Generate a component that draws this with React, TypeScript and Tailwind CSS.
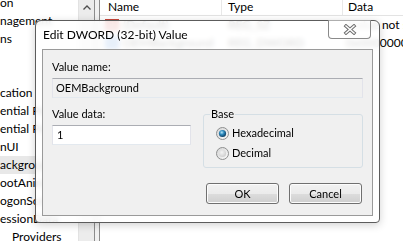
import React from "react";

// Background registry editor rows (left tree is scrolled, so only tails of names show)
const treeRows = [
  "on",
  "nagement",
  "ns",
  "",
  "",
  "cation",
  "ential Provider Filters",
  "ential Providers",
  "nUI",
  "ackground",
  "ootAnimation",
  "ogonScreen",
  "essionData",
];

function Radio({ checked }: { checked: boolean }) {
  return (
    <svg width="13" height="13" viewBox="0 0 13 13" className="shrink-0">
      <defs>
        <linearGradient id={checked ? "ringOn" : "ringOff"} x1="0" y1="0" x2="1" y2="1">
          <stop offset="0" stopColor="#d4d4d4" />
          <stop offset="1" stopColor="#fbfbfb" />
        </linearGradient>
        <radialGradient id="dotOn" cx="40%" cy="35%" r="65%">
          <stop offset="0" stopColor="#b8e6f8" />
          <stop offset="0.45" stopColor="#2e8bbf" />
          <stop offset="1" stopColor="#0d3f63" />
        </radialGradient>
        <radialGradient id="dotOff" cx="40%" cy="35%" r="65%">
          <stop offset="0" stopColor="#f4f4f4" />
          <stop offset="1" stopColor="#cfcfcf" />
        </radialGradient>
      </defs>
      <circle cx="6.5" cy="6.5" r="6" fill={`url(#${checked ? "ringOn" : "ringOff"})`} stroke="#8e8f8f" />
      <circle cx="6.5" cy="6.5" r="3.6" fill={checked ? "url(#dotOn)" : "url(#dotOff)"} />
    </svg>
  );
}

function WinButton({ label }: { label: string }) {
  return (
    <button className="w-[73px] h-[21px] rounded-[3px] border border-[#707070] bg-[linear-gradient(to_bottom,#f2f2f2_0%,#ebebeb_50%,#dddddd_50%,#cfcfcf_100%)] shadow-[inset_0_0_0_1px_#fcfcfc] text-[11px] leading-[19px] text-black">
      {label}
    </button>
  );
}

export default function App() {
  return (
    <div className="relative w-[403px] h-[241px] overflow-hidden bg-white flex text-black font-[Lato,'Noto_Sans',sans-serif]">
      {/* Tree pane */}
      <div className="w-[95px] shrink-0 flex border-r border-[#8c8c8c]">
        <div className="flex-1 overflow-hidden whitespace-nowrap text-[12px] -mt-[6px]">
          {treeRows.map((t, i) => (
            <div key={i} className={`h-[18px] leading-[18px] ${i === 9 ? "bg-[#e8e8e8]" : ""}`}>
              {t}
            </div>
          ))}
          <div className="h-[18px] leading-[18px] pl-[12px]">Providers</div>
        </div>
        <div className="w-[16px] bg-[#ececec] border-l border-[#e2e2e2] flex flex-col">
          <div className="h-[14px] flex items-center justify-center">
            <svg width="8" height="5" viewBox="0 0 8 5">
              <path d="M0.5 4.5 L4 1 L7.5 4.5" fill="none" stroke="#4d4d4d" strokeWidth="1.3" />
            </svg>
          </div>
        </div>
      </div>
      <div className="w-[4px] shrink-0 bg-[#f0f0f0]" />

      {/* List pane */}
      <div className="flex-1 border-l border-[#8c8c8c] flex flex-col text-[12px]">
        <div className="h-[16px] flex border-b border-[#e3e3e3] leading-[14px]">
          <div className="w-[122px] pl-[8px] border-r border-[#e8e8e8]">Name</div>
          <div className="w-[121px] pl-[6px] border-r border-[#e8e8e8]">Type</div>
          <div className="flex-1 pl-[5px]">Data</div>
        </div>
        <div className="h-[18px] flex items-center whitespace-nowrap">
          <div className="w-[122px] pl-[5px] flex items-center gap-[4px]">
            <span className="w-[14px] h-[12px] bg-[#c9473b] text-[7px] text-white leading-[12px] text-center">ab</span>
            <span>(Default)</span>
          </div>
          <div className="w-[121px] pl-[6px]">REG_SZ</div>
          <div className="flex-1 pl-[5px]">(value not set)</div>
        </div>
        <div className="h-[18px] flex items-center whitespace-nowrap">
          <div className="w-[122px] pl-[5px] flex items-center gap-[4px]">
            <span className="w-[14px] h-[12px] bg-[#3d7fd6] text-[6px] text-white leading-[12px] text-center">011</span>
            <span>OEMBackground</span>
          </div>
          <div className="w-[121px] pl-[6px]">REG_DWORD</div>
          <div className="flex-1 pl-[3px]">0x00000001 (1)</div>
        </div>
      </div>

      {/* Dialog */}
      <div className="absolute left-[35px] top-[20px] w-[345px] h-[203px] rounded-t-[6px] rounded-b-[4px] border border-[#5c5c5c] bg-white/85 backdrop-blur-[2.5px] shadow-[0_2px_8px_rgba(0,0,0,0.18)] flex flex-col px-[6px] pb-[6px]">
        <div className="h-[28px] flex items-center pl-[1px] text-[12px]">Edit DWORD (32-bit) Value</div>
        <div className="absolute right-[8px] -top-[1px] w-[43px] h-[19px] rounded-b-[4px] border border-t-0 border-[#8a8a8a] bg-white/50 flex items-center justify-center">
          <svg width="14" height="11" viewBox="0 0 14 11">
            <path d="M3 2 L11 9 M11 2 L3 9" stroke="#6e6e6e" strokeWidth="3.4" strokeLinecap="square" />
            <path d="M3 2 L11 9 M11 2 L3 9" stroke="#ffffff" strokeWidth="1.5" strokeLinecap="square" />
          </svg>
        </div>

        <div className="flex-1 bg-[#f0f0f0] border border-[#9a9a9a] px-[9px] flex flex-col text-[11px]">
          <div className="mt-[10px] h-[14px] leading-[14px]">Value name:</div>
          <div className="mt-[4px] h-[20px] border border-[#e2e3ea] border-t-[#abadb3] border-b-[#e3e9ef] bg-[#f0f0f0] pl-[3px] leading-[18px]">
            OEMBackground
          </div>

          <div className="mt-[9px] flex">
            <div className="w-[139px] flex flex-col">
              <div className="h-[14px] leading-[14px]">Value data:</div>
              <div className="mt-[4px] h-[20px] border border-[#e2e3ea] border-t-[#abadb3] border-b-[#e3e9ef] bg-white pl-[4px] leading-[18px]">
                1
              </div>
            </div>
            <fieldset className="ml-[12px] w-[160px] border border-[#d5dfe5] rounded-[3px]">
              <legend className="ml-[6px] px-[1px] leading-[14px]">Base</legend>
              <div className="pt-[5px] pl-[12px] pb-[7px] flex flex-col gap-[6px]">
                <div className="h-[14px] flex items-center gap-[3px]">
                  <Radio checked />
                  <span className="leading-[14px]">Hexadecimal</span>
                </div>
                <div className="h-[14px] flex items-center gap-[3px]">
                  <Radio checked={false} />
                  <span className="leading-[14px]">Decimal</span>
                </div>
              </div>
            </fieldset>
          </div>

          <div className="mt-[15px] flex justify-end gap-[10px] pr-[1px]">
            <WinButton label="OK" />
            <WinButton label="Cancel" />
          </div>
        </div>
      </div>
    </div>
  );
}
